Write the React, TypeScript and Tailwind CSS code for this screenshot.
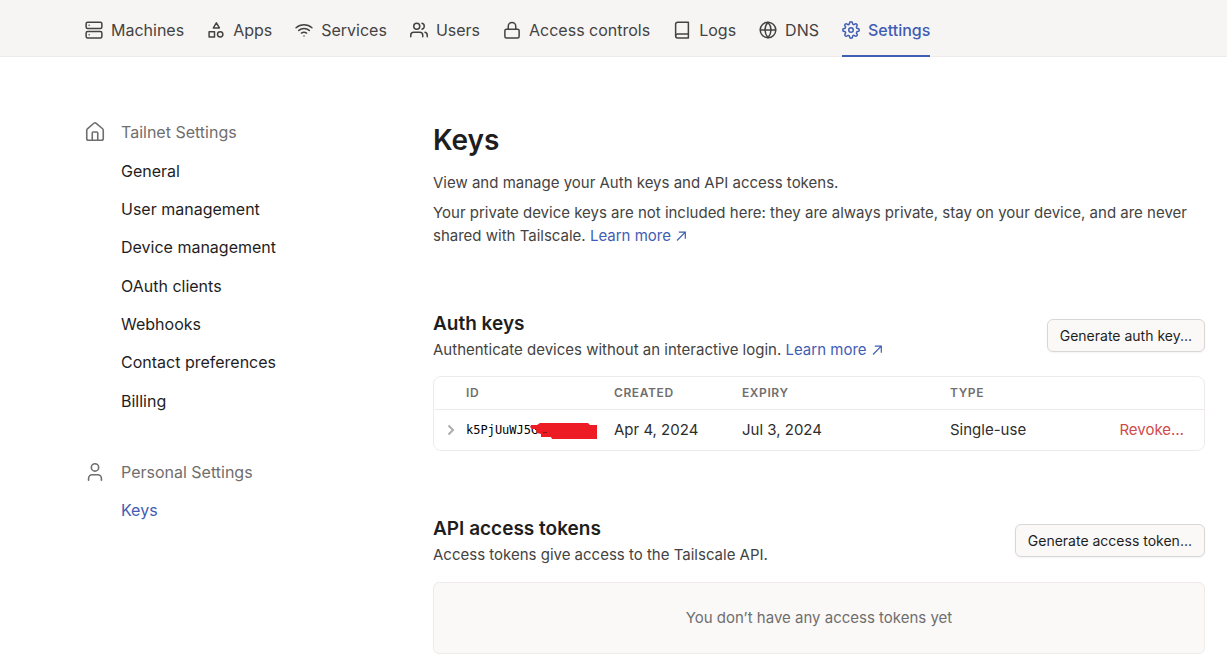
import React from "react";
import { House, User } from "lucide-react";

type IconProps = { children: React.ReactNode };

function NavIcon({ children }: IconProps) {
  return (
    <svg
      viewBox="0 0 24 24"
      fill="none"
      stroke="currentColor"
      strokeWidth={2}
      strokeLinecap="round"
      strokeLinejoin="round"
      className="size-[18px] shrink-0 overflow-visible"
      aria-hidden="true"
    >
      {children}
    </svg>
  );
}

const navItems: { label: string; icon: React.ReactNode; active?: boolean }[] = [
  {
    label: "Machines",
    icon: (
      <>
        <rect x="1.5" y="1.5" width="21" height="8.5" rx="2" />
        <rect x="1.5" y="14" width="21" height="8.5" rx="2" />
        <path d="M5.5 5.75h.01M5.5 18.25h.01" />
      </>
    ),
  },
  {
    label: "Apps",
    icon: (
      <>
        <path d="M12.5 2.5l4 6.7h-8z" />
        <rect x="2.8" y="14.2" width="7.2" height="7.2" />
        <circle cx="17.6" cy="17.8" r="3.6" />
      </>
    ),
  },
  {
    label: "Services",
    icon: <path d="M5 12.55a11 11 0 0 1 14.08 0M1.42 9a16 16 0 0 1 21.16 0M8.53 16.11a6 6 0 0 1 6.95 0M12 20h.01" />,
  },
  {
    label: "Users",
    icon: (
      <>
        <path d="M17 21v-2a4 4 0 0 0-4-4H5a4 4 0 0 0-4 4v2" />
        <circle cx="9" cy="7" r="4" />
        <path d="M23 21v-2a4 4 0 0 0-3-3.87M16 3.13a4 4 0 0 1 0 7.75" />
      </>
    ),
  },
  {
    label: "Access controls",
    icon: (
      <>
        <rect x="2.5" y="11" width="19" height="11.5" rx="2" />
        <path d="M7 11V7a5 5 0 0 1 10 0v4" />
      </>
    ),
  },
  {
    label: "Logs",
    icon: (
      <>
        <path d="M3.5 19.5A2.5 2.5 0 0 1 6 17.3h14.5" />
        <path d="M6 1.8h14.5v20.7H6a2.5 2.5 0 0 1-2.5-2.5V4.3A2.5 2.5 0 0 1 6 1.8z" />
      </>
    ),
  },
  {
    label: "DNS",
    icon: (
      <>
        <circle cx="12" cy="12" r="10.4" />
        <path d="M2 12h20M12 1.8a15.3 15.3 0 0 1 4 10.2 15.3 15.3 0 0 1-4 10.2 15.3 15.3 0 0 1-4-10.2 15.3 15.3 0 0 1 4-10.2z" />
      </>
    ),
  },
  {
    label: "Settings",
    active: true,
    icon: (
      <>
        <circle cx="12" cy="12" r="3" />
        <path d="M19.4 15a1.65 1.65 0 0 0 .33 1.82l.06.06a2 2 0 1 1-2.83 2.83l-.06-.06a1.65 1.65 0 0 0-1.82-.33 1.65 1.65 0 0 0-1 1.51V21a2 2 0 0 1-4 0v-.09A1.65 1.65 0 0 0 9 19.4a1.65 1.65 0 0 0-1.82.33l-.06.06a2 2 0 1 1-2.83-2.83l.06-.06a1.65 1.65 0 0 0 .33-1.82 1.65 1.65 0 0 0-1.51-1H3a2 2 0 0 1 0-4h.09A1.65 1.65 0 0 0 4.6 9a1.65 1.65 0 0 0-.33-1.82l-.06-.06a2 2 0 1 1 2.83-2.83l.06.06a1.65 1.65 0 0 0 1.82.33H9a1.65 1.65 0 0 0 1-1.51V3a2 2 0 0 1 4 0v.09a1.65 1.65 0 0 0 1 1.51 1.65 1.65 0 0 0 1.82-.33l.06-.06a2 2 0 1 1 2.83 2.83l-.06.06a1.65 1.65 0 0 0-.33 1.82V9a1.65 1.65 0 0 0 1.51 1H21a2 2 0 0 1 0 4h-.09a1.65 1.65 0 0 0-1.51 1z" />
      </>
    ),
  },
];

const tailnetLinks = [
  "General",
  "User management",
  "Device management",
  "OAuth clients",
  "Webhooks",
  "Contact preferences",
  "Billing",
];

function LearnMore() {
  return (
    <a href="#learn" className="whitespace-nowrap text-[#3f5db3]">
      Learn more{" "}
      <svg
        viewBox="0 0 12 12"
        fill="none"
        stroke="currentColor"
        strokeWidth={1.2}
        className="inline-block size-3 align-[-1px]"
        aria-hidden="true"
      >
        <path d="M2 10.5l8.3-8.3M3.8 2.2h6.5v6.5" />
      </svg>
    </a>
  );
}

function SectionHeader({ title, action, children }: { title: string; action: string; children: React.ReactNode }) {
  return (
    <div className="flex items-center justify-between gap-4">
      <div>
        <h2 className="text-[19px] leading-7 font-semibold text-[#1f1e1e]">{title}</h2>
        <p className="leading-[23px]">{children}</p>
      </div>
      <button
        type="button"
        className="h-[33px] shrink-0 rounded-md border border-[#dad6d5] bg-[#faf9f8] px-3 text-sm text-[#1f1e1e] shadow-xs"
      >
        {action}
      </button>
    </div>
  );
}

export default function App() {
  return (
    <div className="min-h-screen bg-white font-['Inter',sans-serif] text-base text-[#444342]">
      <header className="border-b border-[#eeebea] bg-[#f7f5f4] pl-[85px]">
        <nav className="flex gap-[23px]">
          {navItems.map((item) => (
            <a
              key={item.label}
              href={`#${item.label}`}
              className={
                item.active
                  ? "-mb-px flex h-[57px] items-center gap-2 border-b-2 border-[#3f5db3] pt-1 font-medium text-[#3f5db3]"
                  : "flex h-14 items-center gap-2 pt-1"
              }
            >
              <NavIcon>{item.icon}</NavIcon>
              {item.label}
            </a>
          ))}
        </nav>
      </header>

      <div className="flex pt-14 pr-[22px] pl-21">
        <aside className="w-[349px] shrink-0 text-[#1f1e1e]">
          <div className="grid h-[307px] auto-rows-fr items-center">
            <h3 className="flex items-center gap-[15px] text-[#706e6d]">
              <House className="size-[22px]" strokeWidth={1.75} aria-hidden="true" />
              Tailnet Settings
            </h3>
            {tailnetLinks.map((label) => (
              <a key={label} href={`#${label}`} className="pl-[37px]">
                {label}
              </a>
            ))}
          </div>
          <div className="mt-[33px] grid h-[76px] auto-rows-fr items-center">
            <h3 className="flex items-center gap-[15px] text-[#706e6d]">
              <User className="size-[22px]" strokeWidth={1.75} aria-hidden="true" />
              Personal Settings
            </h3>
            <a href="#keys" className="pl-[37px] text-[#3f5db3]">
              Keys
            </a>
          </div>
        </aside>

        <main className="min-w-0 flex-1 text-[15px]">
          <h1 className="pt-2 text-[28px] leading-[38px] font-semibold text-[#1f1e1e]">Keys</h1>
          <p className="mt-3 leading-[23px]">View and manage your Auth keys and API access tokens.</p>
          <p className="mt-[7px] leading-[23px]">
            Your private device keys are not included here: they are always private, stay on your device, and are never
            shared with Tailscale. <LearnMore />
          </p>

          <section className="mt-[63px]">
            <SectionHeader title="Auth keys" action="Generate auth key...">
              Authenticate devices without an interactive login. <LearnMore />
            </SectionHeader>
            <div className="mt-[15px] overflow-hidden rounded-lg border border-[#eeebea]">
              <table className="w-full table-fixed border-collapse text-left text-[#2e2d2d]">
                <thead>
                  <tr className="h-8 border-b border-[#eeebea] text-xs tracking-wider text-[#706e6d]">
                    <th className="w-8" aria-label="Details" />
                    <th className="w-[148px] font-semibold">ID</th>
                    <th className="w-32 font-semibold">CREATED</th>
                    <th className="w-52 font-semibold">EXPIRY</th>
                    <th className="font-semibold">TYPE</th>
                    <th className="w-[92px]" aria-label="Actions" />
                  </tr>
                </thead>
                <tbody>
                  <tr className="h-[41px]">
                    <td className="pl-3">
                      <button type="button" aria-label="Expand key" className="block text-[#afacab]">
                        <svg viewBox="0 0 10 12" fill="none" stroke="currentColor" strokeWidth={2} className="h-3 w-[10px]">
                          <path d="M2.5 1.5L7 6l-4.5 4.5" />
                        </svg>
                      </button>
                    </td>
                    <td className="font-['DejaVu_Sans_Mono',monospace] text-xs text-black">
                      <span className="relative inline-block">
                        k5PjUuWJ5G
                        <svg viewBox="0 0 67 16" className="absolute top-px left-16 h-4 w-[67px]" aria-hidden="true">
                          <path d="M1 2h6l3-2h48l2 2h7v14H22l-1-2H11v-3l-4-1-1-4H2L0 4z" fill="#ed1c24" />
                          <path d="M13 9.5h4" stroke="#8a151a" strokeWidth={1} />
                        </svg>
                      </span>
                    </td>
                    <td>Apr 4, 2024</td>
                    <td>Jul 3, 2024</td>
                    <td>Single-use</td>
                    <td className="pr-5 text-right">
                      <button type="button" className="text-[#cf4b4b]">Revoke…</button>
                    </td>
                  </tr>
                </tbody>
              </table>
            </div>
          </section>

          <section className="mt-16">
            <SectionHeader title="API access tokens" action="Generate access token...">
              Access tokens give access to the Tailscale API.
            </SectionHeader>
            <div className="mt-4 rounded-md border border-[#eeebea] bg-[#faf9f8] px-4 py-6 text-center leading-[22px] text-[#706e6d]">
              You don’t have any access tokens yet
            </div>
          </section>
        </main>
      </div>
    </div>
  );
}
